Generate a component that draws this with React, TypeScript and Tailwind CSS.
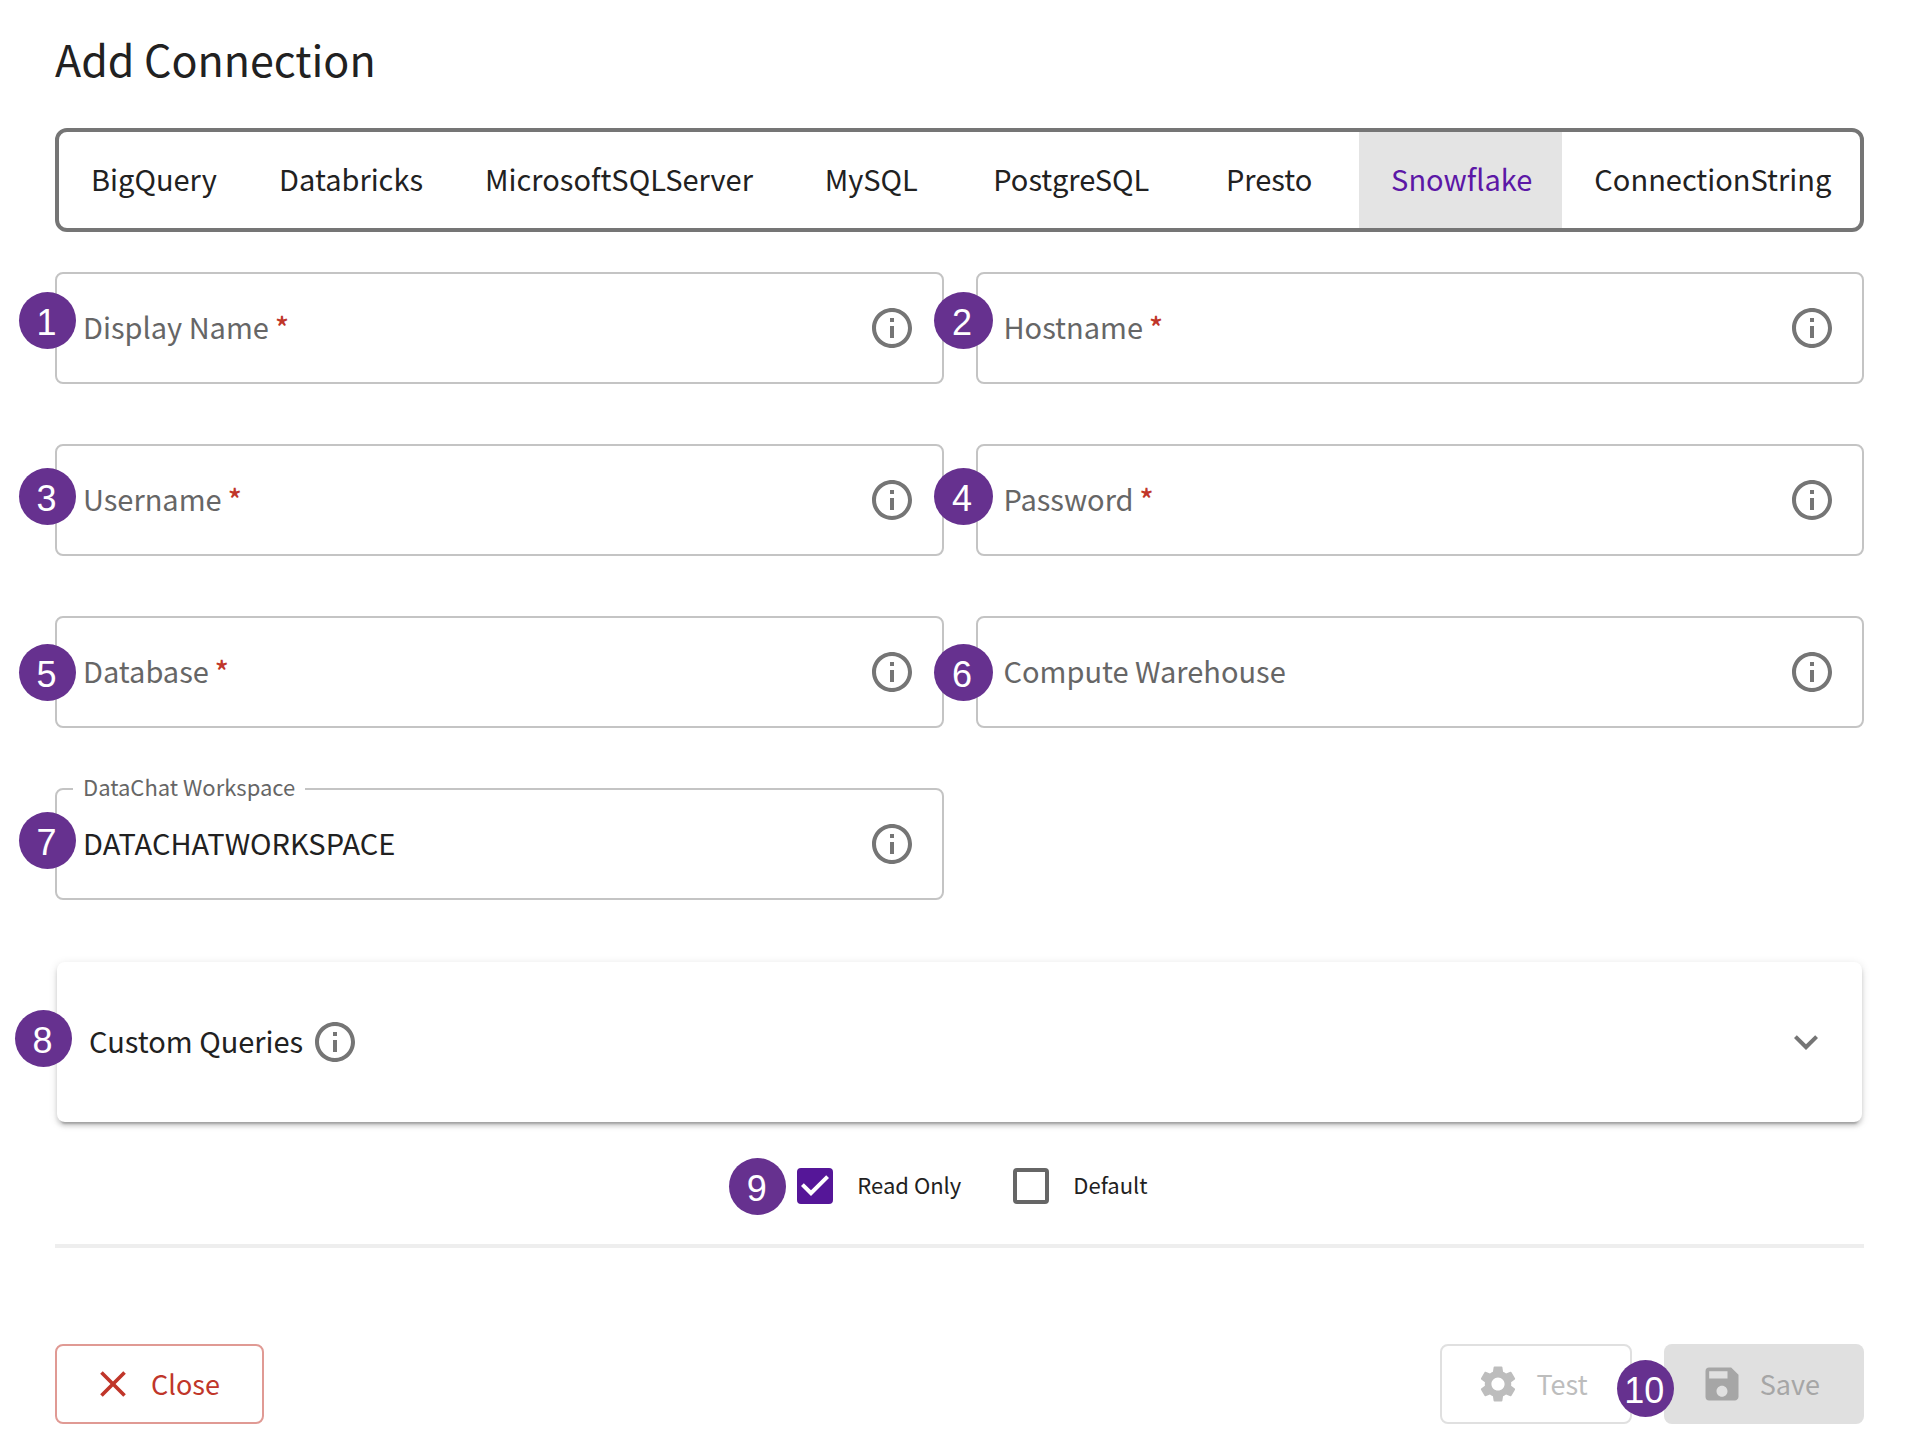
import { useState } from "react";
import {
  MdClose,
  MdExpandMore,
  MdInfoOutline,
  MdSave,
  MdSettings,
} from "react-icons/md";

const sources = [
  "BigQuery",
  "Databricks",
  "MicrosoftSQLServer",
  "MySQL",
  "PostgreSQL",
  "Presto",
  "Snowflake",
  "ConnectionString",
];

const fields = [
  { id: "display-name", label: "Display Name", required: true, step: 1, pin: "top-5 -left-9 w-[57px]" },
  { id: "hostname", label: "Hostname", required: true, step: 2, pin: "top-5 -left-[42px] w-[59px]" },
  { id: "username", label: "Username", required: true, step: 3, pin: "top-6 -left-9 w-[57px]" },
  { id: "password", label: "Password", type: "password", required: true, step: 4, pin: "top-6 -left-[42px] w-[59px]" },
  { id: "database", label: "Database", required: true, step: 5, pin: "top-7 -left-9 w-[57px]" },
  { id: "warehouse", label: "Compute Warehouse", step: 6, pin: "top-7 -left-[42px] w-[59px]" },
  { id: "workspace", label: "DataChat Workspace", value: "DATACHATWORKSPACE", step: 7, pin: "top-6 -left-9 w-[57px]" },
];

// numbered purple marker that sits over the form
function Callout({ step, pin }: { step: number; pin: string }) {
  return (
    <span
      className={`pointer-events-none absolute z-10 flex h-[57px] items-center justify-center rounded-[50%] bg-[#66318f] pt-1 pr-0.5 font-['Liberation_Sans',sans-serif] text-4xl leading-none text-white ${pin}`}
    >
      {step}
    </span>
  );
}

function InfoButton({ about }: { about: string }) {
  return (
    <button type="button" aria-label={`About ${about}`} className="shrink-0 text-[#757575]">
      <MdInfoOutline className="size-12" />
    </button>
  );
}

type FieldProps = {
  id: string;
  label: string;
  type?: string;
  value?: string;
  required?: boolean;
  step: number;
  pin: string;
};

function Field({ id, label, type = "text", value, required, step, pin }: FieldProps) {
  return (
    <div className="relative">
      <div className="flex h-28 items-center rounded-lg border-2 border-[#c4c4c4] px-[26px]">
        <label
          htmlFor={id}
          className={
            value
              ? "absolute -top-4.5 left-[18px] bg-white px-2.5 text-[22px] leading-8 text-[#666]"
              : "mr-2 shrink-0 pb-1 text-[29px] leading-10 text-[#666]"
          }
        >
          {label}
          {required && <span className="ml-1.5 font-medium text-[#c0362a]">*</span>}
        </label>
        <input
          id={id}
          type={type}
          defaultValue={value}
          required={required}
          className="min-w-0 flex-1 bg-transparent pb-1 text-[29px] leading-10 outline-none"
        />
        <InfoButton about={label} />
      </div>
      <Callout step={step} pin={pin} />
    </div>
  );
}

function Check({ id, label, checked }: { id: string; label: string; checked?: boolean }) {
  return (
    <div className="flex items-center gap-6">
      <span className="grid size-9 place-items-center">
        <input
          id={id}
          type="checkbox"
          defaultChecked={checked}
          className="peer col-start-1 row-start-1 size-9 appearance-none rounded-sm border-4 border-[#666] checked:border-[#551698] checked:bg-[#551698]"
        />
        <svg
          viewBox="3 3 18 18"
          className="pointer-events-none invisible col-start-1 row-start-1 size-9 fill-white peer-checked:visible"
        >
          <path d="M10 17l-5-5 1.41-1.41L10 14.17l7.59-7.59L19 8l-9 9z" />
        </svg>
      </span>
      <label htmlFor={id} className="pb-1 text-[22px] leading-8">
        {label}
      </label>
    </div>
  );
}

export default function App() {
  const [active, setActive] = useState("Snowflake");

  return (
    <main className="bg-white pt-7 pr-[62px] pb-[26px] pl-[55px] font-['Noto_Sans_CJK_SC',sans-serif] text-[#212121]">
      <h1 className="text-[43px] leading-[60px]">Add Connection</h1>

      {/* Connection type */}
      <div role="tablist" className="mt-10 flex h-[104px] overflow-hidden rounded-xl border-4 border-[#757575]">
        {sources.map((name) => (
          <button
            key={name}
            type="button"
            role="tab"
            aria-selected={name === active}
            onClick={() => setActive(name)}
            className={`min-w-[180px] grow px-8 pb-1 text-[29px] leading-10 ${
              name === active ? "bg-[#e4e4e4] text-[#5c17a6]" : ""
            }`}
          >
            {name}
          </button>
        ))}
      </div>

      <form className="mt-10">
        <div className="grid grid-cols-2 gap-x-8 gap-y-[60px]">
          {fields.map((field) => (
            <Field key={field.id} {...field} />
          ))}
        </div>

        {/* Custom queries */}
        <section className="relative mx-0.5 mt-[62px] flex h-40 items-center rounded-lg px-8 shadow-[0_6px_2px_-4px_rgba(0,0,0,0.2),0_4px_4px_rgba(0,0,0,0.14),0_2px_10px_rgba(0,0,0,0.12)]">
          <h2 className="pb-1 text-[29px] leading-10">Custom Queries</h2>
          <span className="ml-2 flex">
            <InfoButton about="Custom Queries" />
          </span>
          <button type="button" aria-label="Expand Custom Queries" className="ml-auto text-[#757575]">
            <MdExpandMore className="size-12" />
          </button>
          <Callout step={8} pin="top-12 -left-[42px] w-[57px]" />
        </section>

        <div className="mt-[46px] flex justify-center gap-13 pl-6.5">
          <div className="relative">
            <Check id="read-only" label="Read Only" checked />
            <Callout step={9} pin="-top-2.5 -left-[68px] w-[57px]" />
          </div>
          <Check id="default" label="Default" />
        </div>

        <hr className="mt-10 border-t-4 border-[#eee]" />

        {/* Actions */}
        <div className="mt-24 flex h-20 gap-8 text-[27px] leading-10">
          <button
            type="button"
            className="mr-auto flex items-center gap-4 rounded-lg border-2 border-[#e09a94] pr-[42px] pl-[34px] text-[#c0362a]"
          >
            <MdClose className="size-11" />
            Close
          </button>
          <div className="relative flex">
            <button
              type="button"
              disabled
              className="flex items-center gap-4 rounded-lg border-2 border-[#e0e0e0] pr-[42px] pl-[34px] text-[#bdbdbd]"
            >
              <MdSettings className="size-11" />
              Test
            </button>
            <Callout step={10} pin="top-4 -right-[42px] w-[57px]" />
          </div>
          <button
            type="submit"
            disabled
            className="flex items-center gap-4 rounded-lg bg-[#e0e0e0] pr-11 pl-9 text-[#a6a6a6]"
          >
            <MdSave className="size-11" />
            Save
          </button>
        </div>
      </form>
    </main>
  );
}
